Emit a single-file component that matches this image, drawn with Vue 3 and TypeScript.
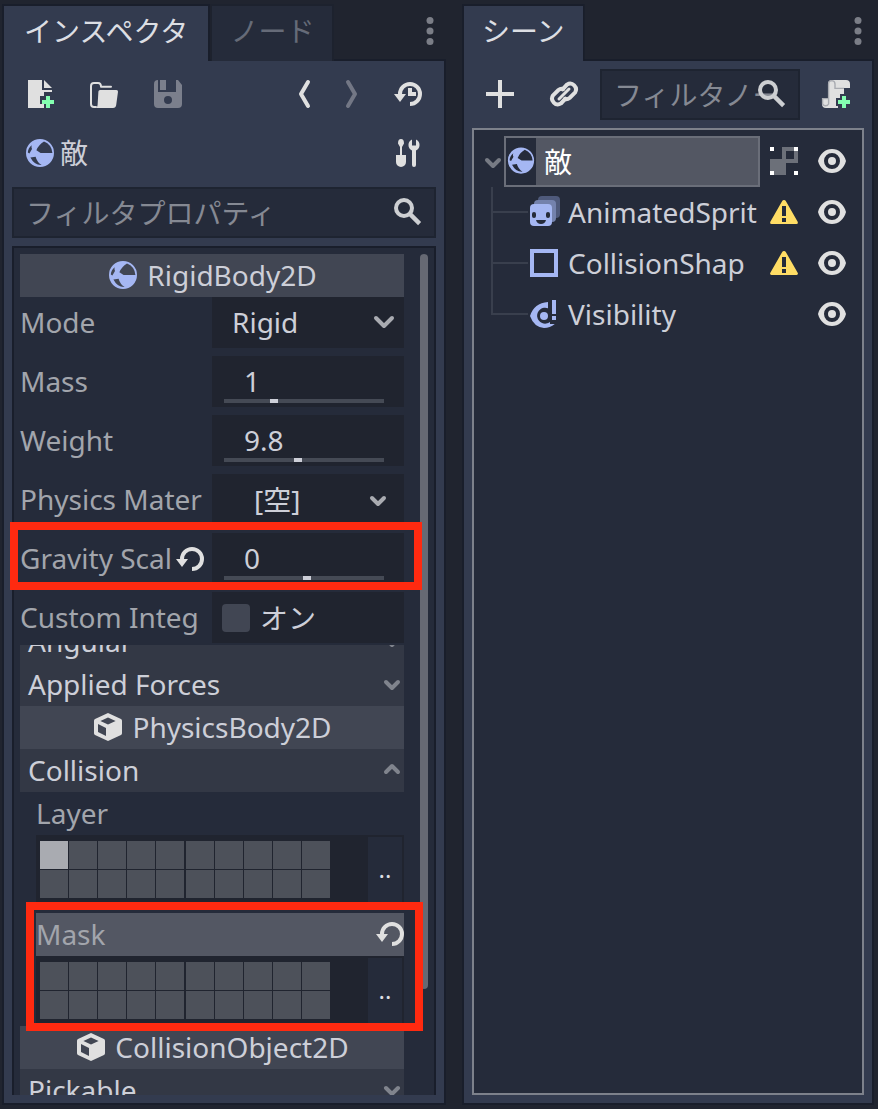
<script setup lang="ts">
import { ref } from 'vue'

interface TreeItem {
  name: string
  icon: string
  warning: boolean
}

const children: TreeItem[] = [
  { name: 'AnimatedSprit', icon: 'sprite', warning: true },
  { name: 'CollisionShap', icon: 'shape', warning: true },
  { name: 'Visibility', icon: 'notifier', warning: false },
]

const mass = ref({ text: '1', pos: 30 })
const weight = ref({ text: '9.8', pos: 46 })
const gravity = ref({ text: '0', pos: 52 })
const numbers = [
  { id: 'mass', label: 'Mass', model: mass },
  { id: 'weight', label: 'Weight', model: weight },
]

const customIntegrator = ref(false)
const mode = ref('Rigid')

const bitGroups = ref([
  { name: 'Layer', bits: Array.from({ length: 20 }, (_, i) => i === 0) },
  { name: 'Mask', bits: Array.from({ length: 20 }, () => false) },
])
</script>

<template>
  <svg class="defs" aria-hidden="true">
    <symbol id="i-rigid" viewBox="0 0 16 16">
      <path fill="#a5b7f3" fill-rule="evenodd" d="M8 1a7 7 0 1 0 0 14A7 7 0 0 0 8 1zM10 2.3Q13.8 3.8 14.2 8H8.3L6.2 6.600Q7.300 4 10 2.300zM3.900 4.100Q3.400 5.300 4 6L2.700 8.200 1.900 7.800Q2 5.600 3.900 4.100zM3.200 10.300L5.800 9.900Q6.500 12.600 8.800 14Q5.200 14.200 3.200 10.300z" />
    </symbol>
    <symbol id="i-eye" viewBox="0 0 16 16">
      <path fill="#e0e0e0" fill-rule="evenodd" d="M8 2C4.700 2 2 4.300 1 8c1 3.700 3.700 6 7 6s6-2.300 7-6C14 4.300 11.300 2 8 2zM8 4a4 4 0 1 1 0 8 4 4 0 0 1 0-8zM8 6a2 2 0 1 0 0 4 2 2 0 0 0 0-4z" />
    </symbol>
    <symbol id="i-warn" viewBox="0 0 16 16">
      <path fill="#ffdd65" fill-rule="evenodd" d="M8 2q-.6 0-.9.5L1.100 13q-.3.900.600 1h12.600q.900-.100.600-1L8.900 2.500Q8.600 2 8 2zM7 5h2v5H7zM7 11h2v2H7z" />
    </symbol>
    <symbol id="i-sprite" viewBox="0 0 16 16">
      <rect x="5" y="0" width="11" height="11" rx="2" fill="#4f5a7b" />
      <rect x="3" y="2" width="11" height="11" rx="2" fill="#7482ad" />
      <rect x="1" y="4" width="11" height="11" rx="2" fill="#a5b7f3" />
      <g fill="#252b3a">
        <rect x="2" y="8" width="2" height="3" rx="1" />
        <rect x="9" y="8" width="2" height="3" rx="1" />
        <path d="M4 12h5q-.5 2-2.500 2T4 12z" />
      </g>
    </symbol>
    <symbol id="i-shape" viewBox="0 0 16 16">
      <rect x="2" y="2" width="12" height="12" fill="none" stroke="#a5b7f3" stroke-width="2" />
    </symbol>
    <symbol id="i-notifier" viewBox="0 0 16 16">
      <path fill="#a5b7f3" d="M10 2V5.100A4 4 0 1 0 11 12V13H13.400Q11 15 8 15 3 14.600 1 9 3 2.500 10 2z" />
      <circle cx="8" cy="9" r="2" fill="#a5b7f3" />
      <path fill="#a5b7f3" d="M12 1h2v7h-2zM12 9h2v2h-2z" />
    </symbol>
    <symbol id="i-reload" viewBox="0 0 16 16">
      <path fill="none" stroke="#e0e0e0" stroke-width="2" d="M4 8a5 5 0 1 1 5 5" />
      <path fill="#e0e0e0" d="M1 8h6l-3 4z" />
    </symbol>
    <symbol id="i-search" viewBox="0 0 16 16">
      <circle cx="6" cy="6" r="4" fill="none" stroke="#cdcfd2" stroke-width="2" />
      <path stroke="#cdcfd2" stroke-width="2.200" d="M8.800 8.800l5 5" />
    </symbol>
    <symbol id="i-cube" viewBox="0 0 16 16">
      <path fill="#e0e0e0" fill-rule="evenodd" d="M8 1l6.500 3q.5.300.5.900v6.200q0 .6-.5.900L8 15l-6.500-3q-.5-.3-.5-.9V4.900q0-.6.5-.9zM8 3.200L4.200 5 8 6.800 11.800 5zM3 6.500v4l4 2V8.500z" />
    </symbol>
    <symbol id="i-down" viewBox="0 0 16 16">
      <path fill="none" stroke="currentColor" stroke-width="2" stroke-linecap="round" stroke-linejoin="round" d="M5 7l3 3 3-3" />
    </symbol>
    <symbol id="i-dots" viewBox="0 0 16 16">
      <g fill="#7b7e87"><circle cx="8" cy="2" r="2" /><circle cx="8" cy="8" r="2" /><circle cx="8" cy="14" r="2" /></g>
    </symbol>
  </svg>

  <main class="editor">
    <section class="dock">
      <div class="tabs" role="tablist">
        <button class="tab active" role="tab" aria-selected="true">インスペクタ</button>
        <button class="tab short" role="tab" aria-selected="false">ノード</button>
        <button class="more" aria-label="Dock menu"><svg class="icon"><use href="#i-dots" /></svg></button>
      </div>
      <div class="body">
        <div class="bar toolbar">
          <button class="tool" aria-label="New resource">
            <svg class="icon" viewBox="0 0 16 16">
              <path fill="#e0e0e0" d="M2 1h7v5h5v1h-4v2H8v4h2v2H2z" /><path fill="#e0e0e0" d="M10 1l4 4h-4z" />
              <path fill="#84ffb1" d="M11 9h2v2h2v2h-2v2h-2v-2H9v-2h2z" />
            </svg>
          </button>
          <button class="tool" aria-label="Open resource">
            <svg class="icon" viewBox="0 0 16 16">
              <path fill="none" stroke="#e0e0e0" stroke-linecap="round" stroke-linejoin="round" d="M4 14.500H3a1.500 1.500 0 0 1-1.500-1.500V4Q1.500 2.500 3 2.500h2Q6.500 2.500 6.500 4.400H11.500" />
              <path fill="#e0e0e0" d="M6 6h8.200q.900 0 .8.900l-.9 6.600q-.2 1.500-1.600 1.500H4q.7-.5.8-1.500l.4-6.700Q5.300 6 6 6z" />
            </svg>
          </button>
          <button class="tool" aria-label="Save resource" disabled>
            <svg class="icon" viewBox="0 0 16 16">
              <path fill="#7b7f8c" fill-rule="evenodd" d="M3 1v6h9V1h1l2 2.500V13a2 2 0 0 1-2 2H3a2 2 0 0 1-2-2V3a2 2 0 0 1 2-2zM8 9a2 2 0 1 0 0 4 2 2 0 0 0 0-4z" />
              <path fill="#7b7f8c" d="M4 1h3v5H4z" />
            </svg>
          </button>
          <span class="spring" />
          <button class="tool narrow" aria-label="Previous">
            <svg class="icon" viewBox="0 0 16 16"><path fill="none" stroke="#e0e0e0" stroke-width="2" stroke-linecap="round" stroke-linejoin="round" d="M10 2L6.500 8l3.500 6" /></svg>
          </button>
          <button class="tool narrow" aria-label="Next" disabled>
            <svg class="icon" viewBox="0 0 16 16"><path fill="none" stroke="#737785" stroke-width="2" stroke-linecap="round" stroke-linejoin="round" d="M6 2l3.500 6L6 14" /></svg>
          </button>
          <button class="tool history" aria-label="History">
            <svg class="icon"><use href="#i-reload" /><path fill="#e0e0e0" transform="scale(2)" d="M8 5h2v2h2v2H8z" /></svg>
          </button>
        </div>

        <div class="bar object">
          <svg class="icon"><use href="#i-rigid" /></svg>
          <span>敵</span>
          <span class="spring" />
          <button class="tool" aria-label="Object properties">
            <svg class="icon" viewBox="0 0 16 16">
              <path fill="#e0e0e0" d="M4.500 1q1.500 0 1.500 2.200L5 5v4h2v3.500a2.500 2.500 0 0 1-5 0V9h2V5L3 3.200Q3 1 4.500 1z" />
              <path fill="#e0e0e0" d="M10 1.200V4.200h2V1.200a3.100 3.100 0 0 1 0 5.600V14a1 1 0 0 1-2 0V6.800a3.100 3.100 0 0 1 0-5.600z" />
            </svg>
          </button>
        </div>

        <div class="search">
          <input type="text" class="filter" placeholder="フィルタプロパティ" aria-label="フィルタプロパティ" />
          <svg class="icon"><use href="#i-search" /></svg>
        </div>

        <div class="panel">
          <div class="content">
            <h2 class="category"><svg class="icon"><use href="#i-rigid" /></svg>RigidBody2D</h2>
            <div class="props">
              <div class="prop">
                <label for="mode">Mode</label>
                <div class="field">
                  <select id="mode" v-model="mode"><option>Rigid</option></select>
                  <svg class="select-arrow" viewBox="0 0 22 14"><path fill="none" stroke="#a9abb1" stroke-width="4" stroke-linecap="round" stroke-linejoin="round" d="M3 3l8 8 8-8" /></svg>
                </div>
              </div>
              <div v-for="n in numbers" :key="n.id" class="prop">
                <label :for="n.id">{{ n.label }}</label>
                <div class="field number">
                  <input :id="n.id" v-model="n.model.value.text" type="text" />
                  <input v-model="n.model.value.pos" type="range" :aria-label="n.label" />
                </div>
              </div>
              <div class="prop">
                <label for="material">Physics Mater</label>
                <button id="material" class="field resource"><span>[空]</span><svg class="icon"><use href="#i-down" /></svg></button>
              </div>
              <div class="prop">
                <label for="gravity">Gravity Scal</label>
                <button class="reset" aria-label="Reset gravity scale"><svg class="icon"><use href="#i-reload" /></svg></button>
                <div class="field number">
                  <input id="gravity" v-model="gravity.text" type="text" />
                  <input v-model="gravity.pos" type="range" aria-label="Gravity scale" />
                </div>
                <i class="mark mark-row" />
              </div>
              <div class="prop">
                <label for="integrator">Custom Integ</label>
                <label class="field check"><input id="integrator" v-model="customIntegrator" type="checkbox" />オン</label>
              </div>
            </div>
            <div class="cut"><button class="group">Angular<svg class="icon"><use href="#i-down" /></svg></button></div>
            <button class="group">Applied Forces<svg class="icon"><use href="#i-down" /></svg></button>
            <h2 class="category"><svg class="icon"><use href="#i-cube" /></svg>PhysicsBody2D</h2>
            <button class="group open">Collision<svg class="icon"><use href="#i-down" /></svg></button>
            <div class="collision">
              <div v-for="g in bitGroups" :key="g.name" class="bits" :class="{ selected: g.name === 'Mask' }">
                <div class="bits-head">
                  {{ g.name }}
                  <button v-if="g.name === 'Mask'" class="reset" aria-label="Reset mask"><svg class="icon"><use href="#i-reload" /></svg></button>
                </div>
                <div class="bits-row">
                  <div class="grid">
                    <button v-for="(on, i) in g.bits" :key="i" class="cell" :class="{ on }" :aria-label="`${g.name} ${i + 1}`" :aria-pressed="on" @click="g.bits[i] = !on" />
                  </div>
                  <button class="names" :aria-label="`${g.name} names`">..</button>
                </div>
                <i v-if="g.name === 'Mask'" class="mark mark-group" />
              </div>
            </div>
            <h2 class="category"><svg class="icon"><use href="#i-cube" /></svg>CollisionObject2D</h2>
            <button class="group">Pickable<svg class="icon"><use href="#i-down" /></svg></button>
          </div>
          <div class="track"><div class="thumb" /></div>
        </div>
      </div>
    </section>

    <section class="dock">
      <div class="tabs" role="tablist">
        <button class="tab short active" role="tab" aria-selected="true">シーン</button>
        <button class="more" aria-label="Dock menu"><svg class="icon"><use href="#i-dots" /></svg></button>
      </div>
      <div class="body">
        <div class="bar scene-bar">
          <button class="tool" aria-label="Add node">
            <svg class="icon" viewBox="0 0 16 16"><path fill="#e0e0e0" d="M7 1h2v6h6v2H9v6H7V9H1V7h6z" /></svg>
          </button>
          <button class="tool" aria-label="Instance scene">
            <svg class="icon" viewBox="0 0 16 16">
              <g fill="none" stroke="#e0e0e0" stroke-width="2" stroke-linecap="round">
                <path d="M7.300 5.700L9.500 3.300a2.900 2.900 0 0 1 4 4L10.800 10a2.800 2.800 0 0 1-2.300.5" />
                <path d="M8.700 10.300L6.500 12.700a2.900 2.900 0 0 1-4-4L5.200 6a2.800 2.800 0 0 1 2.300-.5" />
                <path d="M5.500 10.500l5-5" stroke-width="1.500" />
              </g>
            </svg>
          </button>
          <div class="search">
            <input type="text" class="filter" placeholder="フィルタノー" aria-label="フィルタノード" />
            <svg class="icon"><use href="#i-search" /></svg>
          </div>
          <button class="tool" aria-label="Attach script">
            <svg class="icon" viewBox="0 0 16 16">
              <path fill="#e0e0e0" d="M6 1h7a2 2 0 0 1 2 2v2h-3v3h-2v2H8v4h1v1H3a2 2 0 0 1-2-2v-3h3V3a2 2 0 0 1 2-2z" />
              <path fill="none" stroke="#a9abb1" stroke-width=".7" d="M6 1.300A1.700 1.700 0 0 0 4.300 3v7.300H1.300V13a1.700 1.700 0 0 0 3 0v-2.700M6 1.300Q7.500 1.500 7.500 3v2.200H12" />
              <path fill="#84ffb1" d="M11 9h2v2h2v2h-2v2h-2v-2H9v-2h2z" />
            </svg>
          </button>
        </div>
        <div class="tree" role="tree">
          <div class="row root" role="treeitem" aria-selected="true">
            <button class="fold" aria-label="Collapse"><svg class="icon"><use href="#i-down" /></svg></button>
            <div class="selection"><svg class="icon" viewBox="0 0 16 16"><use href="#i-rigid" /></svg><span>敵</span></div>
            <button class="tool" aria-label="Group">
              <svg class="icon" viewBox="0 0 16 16">
                <path fill="#6c7079" fill-rule="evenodd" d="M7 1h8v8H9v6H1V7h6zM9 3v4h4V3z" />
                <path fill="#fff" d="M1 1h2v2H1zM13 1h2v2h-2zM1 13h2v2H1zM13 13h2v2h-2z" />
              </svg>
            </button>
            <button class="tool" aria-label="Toggle visibility"><svg class="icon"><use href="#i-eye" /></svg></button>
          </div>
          <div class="branch">
            <div v-for="c in children" :key="c.name" class="row child" role="treeitem">
              <svg class="icon"><use :href="`#i-${c.icon}`" /></svg>
              <span class="name">{{ c.name }}</span>
              <button v-if="c.warning" class="tool" aria-label="Warning"><svg class="icon"><use href="#i-warn" /></svg></button>
              <button class="tool" aria-label="Toggle visibility"><svg class="icon"><use href="#i-eye" /></svg></button>
            </div>
          </div>
        </div>
      </div>
    </section>
  </main>
</template>

<style>
body { background: #20242f; }
</style>

<style scoped>
* { box-sizing: border-box; }
button, input, select {
  font: inherit;
  color: inherit;
  background: none;
  border: 0;
  border-radius: 0;
  margin: 0;
  padding: 0;
  min-width: 0;
}
.defs { display: none; }
.icon { width: 32px; height: 32px; flex: none; display: block; }
.editor {
  height: 100vh;
  display: grid;
  grid-template-columns: 440fr 408fr;
  gap: 20px;
  padding: 6px 6px 6px 4px;
  background: #20242f;
  color: #cdcfd8;
  font-family: "Noto Sans", "Noto Sans CJK JP", sans-serif;
  font-size: 28px;
  line-height: 42px;
}
.dock { display: flex; flex-direction: column; min-width: 0; min-height: 0; }
.tabs { display: flex; flex: none; height: 55px; gap: 4px; }
.tab {
  position: relative;
  z-index: 1;
  padding: 0 20px 6px;
  background: #252b3a;
  color: #666b78;
  box-shadow: 0 0 0 2px #1d222e;
  clip-path: inset(-2px -2px 0 -2px);
}
.short { padding: 0 18px 6px; }
.tab.active { background: #333b4f; color: #dcdee3; box-shadow: 0 0 0 2px #191e2b; }
.more { margin-left: auto; padding-bottom: 5px; }
.more .icon { width: 28px; }
.body {
  flex: 1;
  min-height: 0;
  display: flex;
  flex-direction: column;
  gap: 8px;
  padding: 8px;
  background: #333b4f;
  box-shadow: 0 0 0 2px #191e2b;
}
.bar { display: flex; align-items: center; flex: none; height: 51px; padding: 0 12px 2px; }
.spring { flex: 1; }
.toolbar { gap: 32px; }
.narrow { margin-right: -16px; }
.history { margin-left: 8px; }
.object { gap: 4px; }
.search { position: relative; flex: none; height: 51px; }
.filter {
  width: 100%;
  height: 100%;
  padding: 0 60px 0 12px;
  background: #252b3a;
  border: 2px solid #1e2431;
  outline: 0;
}
.filter::placeholder { color: #858993; opacity: 1; }
.search .icon { position: absolute; right: 12px; top: 9px; }
.panel {
  flex: 1;
  min-height: 0;
  display: flex;
  gap: 16px;
  padding: 6px 6px 0;
  background: #252b3a;
  border: 2px solid #191e2b;
  border-bottom: 0;
}
.content { flex: 1; min-width: 0; display: flex; flex-direction: column; overflow: hidden; margin: 0 -20px 0 -12px; padding: 0 20px 0 12px; }
.content > * { flex: none; }
.track { width: 8px; }
.thumb { height: 735px; border-radius: 4px; background: #666973; }
.category {
  margin: 0;
  height: 43px;
  display: flex;
  align-items: center;
  justify-content: center;
  gap: 8px;
  padding-bottom: 2px;
  background: #414653;
  font-size: inherit;
  font-weight: 400;
}
.props { display: grid; gap: 8px; margin-bottom: 2px; }
.prop { position: relative; display: flex; align-items: center; height: 51px; color: #a2a5ac; }
.prop > label:first-child { flex: 1; white-space: nowrap; padding-bottom: 2px; }
.field { position: relative; width: 50%; height: 51px; background: #20242f; color: #cdcfd8; }
select { appearance: none; width: 100%; height: 100%; padding: 0 40px 2px 20px; outline: 0; }
.select-arrow { position: absolute; right: 9px; top: 18px; width: 22px; height: 14px; pointer-events: none; }
.number { display: flex; flex-direction: column; padding: 4px 20px 4px 12px; }
.number input[type="text"] { width: 100%; height: 39px; padding: 2px 0 0 20px; outline: 0; }
.number input[type="range"] { appearance: none; width: 100%; height: 4px; background: #454a55; }
.number input[type="range"]::-webkit-slider-thumb { appearance: none; width: 8px; height: 4px; background: #cdcfd8; }
.resource { display: flex; align-items: center; justify-content: space-between; padding: 0 10px 0 42px; }
.resource .icon { color: #a9abb1; }
.reset { margin-right: 6px; }
.check { display: flex; align-items: center; gap: 10px; padding-left: 10px; }
.check input { appearance: none; width: 28px; height: 28px; border-radius: 4px; background: #414653; }
.check input:checked { background: #a9abb1; }
.group {
  display: flex;
  align-items: center;
  justify-content: space-between;
  width: 100%;
  height: 43px;
  padding: 0 0 2px 8px;
  background: #333845;
}
.group .icon { color: #80848d; margin-right: -4px; }
.open .icon { transform: rotate(180deg); }
.cut { height: 18px; display: flex; align-items: flex-end; overflow: hidden; }
.cut .group { flex: none; }
.collision { display: grid; gap: 8px; padding-left: 16px; }
.bits { position: relative; color: #a2a5ac; }
.bits-head { display: flex; align-items: center; justify-content: space-between; height: 43px; padding-bottom: 2px; }
.bits-head .reset { margin-right: -2px; }
.selected .bits-head { background: #535763; }
.bits-row { display: flex; justify-content: space-between; height: 70px; padding: 2px 2px 2px 4px; background: #20242f; }
.grid { display: grid; grid-template-columns: repeat(5, 28px) 29px repeat(4, 28px); grid-auto-rows: 28px; gap: 1px; padding-top: 4px; }
.cell { background: #4d515a; }
.cell:nth-child(10n + 6) { box-shadow: inset 1px 0 #20242f; }
.cell.on { background: #a9abb1; }
.names { width: 34px; background: #252b3a; color: #dcdee3; font-size: 24px; padding-bottom: 2px; }
.mark { position: absolute; border: 8px solid #ff2a10; pointer-events: none; z-index: 2; }
.mark-row { inset: -11px -18px -6px -10px; }
.mark-group { inset: -11px -19px -5px -10px; }
.scene-bar { gap: 32px; padding-bottom: 0; }
.scene-bar .tool { padding-bottom: 2px; }
.scene-bar .search { flex: 1; margin: 0 -12px; }
.scene-bar .filter { padding-right: 24px; }
.tree { flex: 1; min-height: 0; padding: 6px 14px 6px 8px; background: #252b3a; border: 2px solid #7d818b; }
.row { display: flex; align-items: center; height: 51px; }
.row .tool { margin-left: 16px; padding-bottom: 2px; }
.root .tool:nth-of-type(2) { margin-left: 8px; }
.fold { width: 22px; color: #777b84; display: flex; justify-content: center; }
.selection { flex: 1; display: flex; align-items: center; gap: 6px; height: 51px; background: #535763; border: 2px solid #6a6e79; color: #fff; }
.selection .icon { height: 47px; background: #252b3a; margin-left: -2px; border-left: 2px solid #6a6e79; }
.selection .icon { width: 32px; padding-bottom: 2px; margin-right: 2px; }
.branch { margin-left: 9px; padding-left: 37px; position: relative; }
.branch::before { content: ""; position: absolute; left: 0; top: 0; bottom: 25px; width: 2px; background: #393f4d; }
.child { position: relative; padding-bottom: 2px; }
.child .tool { padding-bottom: 0; }
.child::before { content: ""; position: absolute; left: -37px; top: 24px; width: 37px; height: 2px; background: #393f4d; }
.name { flex: 1; min-width: 0; padding-left: 8px; white-space: nowrap; }
</style>
